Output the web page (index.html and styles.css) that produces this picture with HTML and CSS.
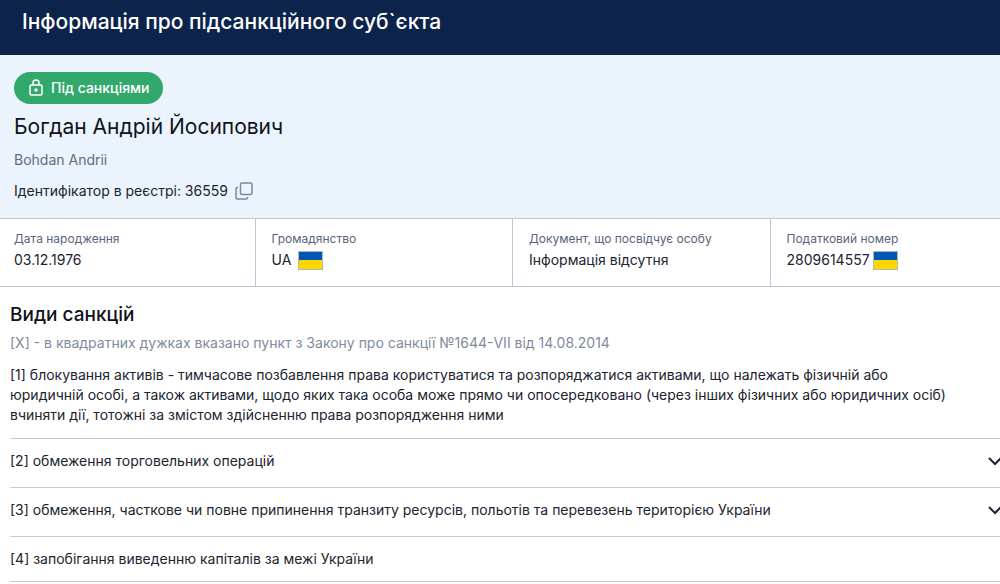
FILE: index.html
```
<!DOCTYPE html>
<html lang="uk">
<head>
    <meta charset="UTF-8">
    <meta name="viewport" content="width=device-width, initial-scale=1.0">
    <title>Інформація про підсанкційного суб`єкта</title>
    <link rel="stylesheet" href="styles.css">
</head>
<body>
    <header class="header">
        <h1>Інформація про підсанкційного суб`єкта</h1>
    </header>
    <main>
        <section class="person">
            <div class="badge">
                <svg width="14" height="18" viewBox="0 0 14 18" fill="none" stroke="currentColor" stroke-width="1.5" aria-hidden="true">
                    <rect x="1" y="6" width="12" height="10" rx="1.5"/>
                    <path d="M4 6V4a3 3 0 0 1 6 0v2"/>
                    <circle cx="7" cy="11" r="1" fill="currentColor"/>
                </svg>
                <span>Під санкціями</span>
            </div>
            <h2 class="person-name">Богдан Андрій Йосипович</h2>
            <p class="person-latin">Bohdan Andrii</p>
            <div class="person-id">
                <span>Ідентифікатор в реєстрі: 36559</span>
                <button type="button" class="copy-btn" aria-label="Копіювати">
                    <svg width="18" height="18" viewBox="0 0 18 18" fill="none" stroke="currentColor" stroke-width="1.5">
                        <rect x="5.5" y="1" width="11.5" height="11.5" rx="1.5"/>
                        <path d="M3 5.5h-.5A1.5 1.5 0 0 0 1 7v8.500A1.5 1.5 0 0 0 2.500 17H11a1.5 1.5 0 0 0 1.5-1.5V15"/>
                    </svg>
                </button>
            </div>
        </section>

        <dl class="details">
            <div class="detail">
                <dt>Дата народження</dt>
                <dd>03.12.1976</dd>
            </div>
            <div class="detail">
                <dt>Громадянство</dt>
                <dd>UA <span class="flag"></span></dd>
            </div>
            <div class="detail">
                <dt>Документ, що посвідчує особу</dt>
                <dd>Інформація відсутня</dd>
            </div>
            <div class="detail">
                <dt>Податковий номер</dt>
                <dd class="tax">2809614557<span class="flag"></span></dd>
            </div>
        </dl>

        <section class="sanctions">
            <h2>Види санкцій</h2>
            <p class="note">[X] - в квадратних дужках вказано пункт з Закону про санкції №1644-VII від 14.08.2014</p>
            <ul class="list">
                <li class="item first">[1] блокування активів - тимчасове позбавлення права користуватися та розпоряджатися активами, що належать фізичній або юридичній особі, а також активами, щодо яких така особа може прямо чи опосередковано (через інших фізичних або юридичних осіб) вчиняти дії, тотожні за змістом здійсненню права розпорядження ними</li>
                <li class="item">
                    <button type="button" class="toggle" aria-expanded="false">
                        <span>[2] обмеження торговельних операцій</span>
                        <svg width="14" height="10" viewBox="0 0 14 10" fill="none" stroke="currentColor" stroke-width="2"><path d="M1 2l6 6 6-6"/></svg>
                    </button>
                </li>
                <li class="item">
                    <button type="button" class="toggle" aria-expanded="false">
                        <span>[3] обмеження, часткове чи повне припинення транзиту ресурсів, польотів та перевезень територією України</span>
                        <svg width="14" height="10" viewBox="0 0 14 10" fill="none" stroke="currentColor" stroke-width="2"><path d="M1 2l6 6 6-6"/></svg>
                    </button>
                </li>
                <li class="item last">[4] запобігання виведенню капіталів за межі України</li>
            </ul>
        </section>
    </main>
</body>
</html>
```
FILE: styles.css
```
* {
    box-sizing: border-box;
}

body {
    margin: 0;
    font-family: Inter, "Liberation Sans", sans-serif;
    font-size: 14px;
    line-height: 20px;
    color: #20242f;
    background-color: #fff;
    overflow-x: hidden;
}

h1, h2, p, dl, dd, ul {
    margin: 0;
    padding: 0;
}

h1, h2 {
    font-weight: 500;
}

button {
    padding: 0;
    border: none;
    background: none;
    font: inherit;
    color: inherit;
    cursor: pointer;
}

svg {
    display: block;
    flex-shrink: 0;
}

.header {
    padding: 8px 22px 19px;
    background-color: #0c234c;
    color: #fff;
}

.header h1 {
    font-size: 21px;
    line-height: 28px;
}

.person {
    padding: 17px 14px;
    background-color: #ebf3fc;
}

.badge {
    display: inline-flex;
    align-items: center;
    gap: 8px;
    height: 32px;
    padding: 0 14px 0 15px;
    border-radius: 16px;
    background-color: #32a86d;
    color: #fff;
    font-weight: 500;
}

.person-name {
    margin-top: 9px;
    font-size: 21px;
    font-weight: 400;
    line-height: 28px;
    color: #0f131c;
}

.person-latin {
    margin-top: 9px;
    color: #616c80;
}

.person-id {
    display: flex;
    align-items: center;
    gap: 7px;
    margin-top: 11px;
}

.copy-btn {
    color: #7c889c;
}

/* last column runs past the window edge */
.details {
    display: grid;
    grid-template-columns: repeat(4, 1fr);
    margin: 0 -28px 0 -2px;
    border-top: 1px solid #c3c6d4;
    border-bottom: 1px solid #c3c6d4;
}

.detail {
    padding: 11px 16px 14px;
    border-right: 1px solid #c3c6d4;
}

.detail dt {
    font-size: 12px;
    line-height: 18px;
    color: #59657b;
}

.detail dd {
    display: flex;
    align-items: center;
    gap: 7px;
    height: 24px;
}

.detail .tax {
    gap: 3px;
}

.flag {
    width: 25px;
    height: 19px;
    border: 1px solid #b3b9b0;
    background: linear-gradient(#0057b8 50%, #ffd700 50%);
}

.sanctions {
    padding: 16px 0 0 10px;
}

.sanctions h2 {
    font-size: 19px;
    line-height: 24px;
    color: #0f131c;
}

.note {
    margin-top: 6px;
    color: #7f8ba0;
}

.list {
    margin-right: -2px;
    list-style: none;
}

.item {
    padding: 12px 0 16px;
    border-bottom: 1px solid #c7c9d6;
}

.first {
    padding: 12px 48px 13px 0;
}

.last {
    padding: 12px 0;
}

.toggle {
    display: flex;
    justify-content: space-between;
    align-items: center;
    width: 100%;
    text-align: left;
}
```
